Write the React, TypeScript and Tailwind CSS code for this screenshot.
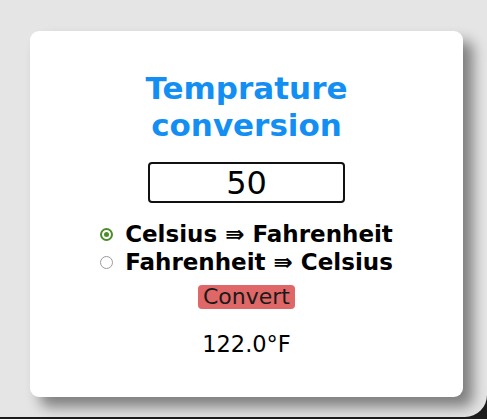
import React from "react";

export default function App() {
  return (
    <div className="w-[487px] h-[419px] bg-[#1c1c1c] overflow-hidden">
      <div className="w-[487px] h-[417px] bg-[#e5e5e5] rounded-br-[22px] pt-[31px] pl-[30px]" style={{ fontFamily: '"DejaVu Sans", sans-serif' }}>
        <div className="w-[433px] h-[366px] bg-white rounded-[9px] shadow-[10px_10px_14px_rgba(0,0,0,0.45)] flex flex-col items-center pt-[39px]">
          <h1 className="text-[31px] leading-[37px] font-bold text-[#138ff4] text-center w-[260px]">
            Temprature conversion
          </h1>
          <input
            readOnly
            value="50"
            className="mt-[18px] w-[197px] h-[41px] border-2 border-[#111] rounded-[4px] text-center text-[32px] leading-[37px] text-black outline-none"
          />
          <div className="mt-[17px] flex flex-col text-[23px] font-bold text-black leading-[28px]">
            <label className="flex items-center">
              <span className="w-[13px] h-[13px] rounded-full border-2 border-[#4c8c2a] flex items-center justify-center mr-[12px] mt-[1px]">
                <span className="w-[5px] h-[5px] rounded-full bg-[#4c8c2a]" />
              </span>
              Celsius ⇛ Fahrenheit
            </label>
            <label className="flex items-center">
              <span className="w-[13px] h-[13px] rounded-full border-[1.5px] border-[#9a9a9a] mr-[12px] mt-[1px]" />
              Fahrenheit ⇛ Celsius
            </label>
          </div>
          <button className="mt-[9px] bg-[#e06767] rounded-[4px] px-[5px] h-[24px] text-[22px] leading-[24px] text-[#1a1a1a]">
            Convert
          </button>
          <div className="mt-[21px] text-[22.5px] leading-[28px] text-black">122.0°F</div>
        </div>
      </div>
    </div>
  );
}
